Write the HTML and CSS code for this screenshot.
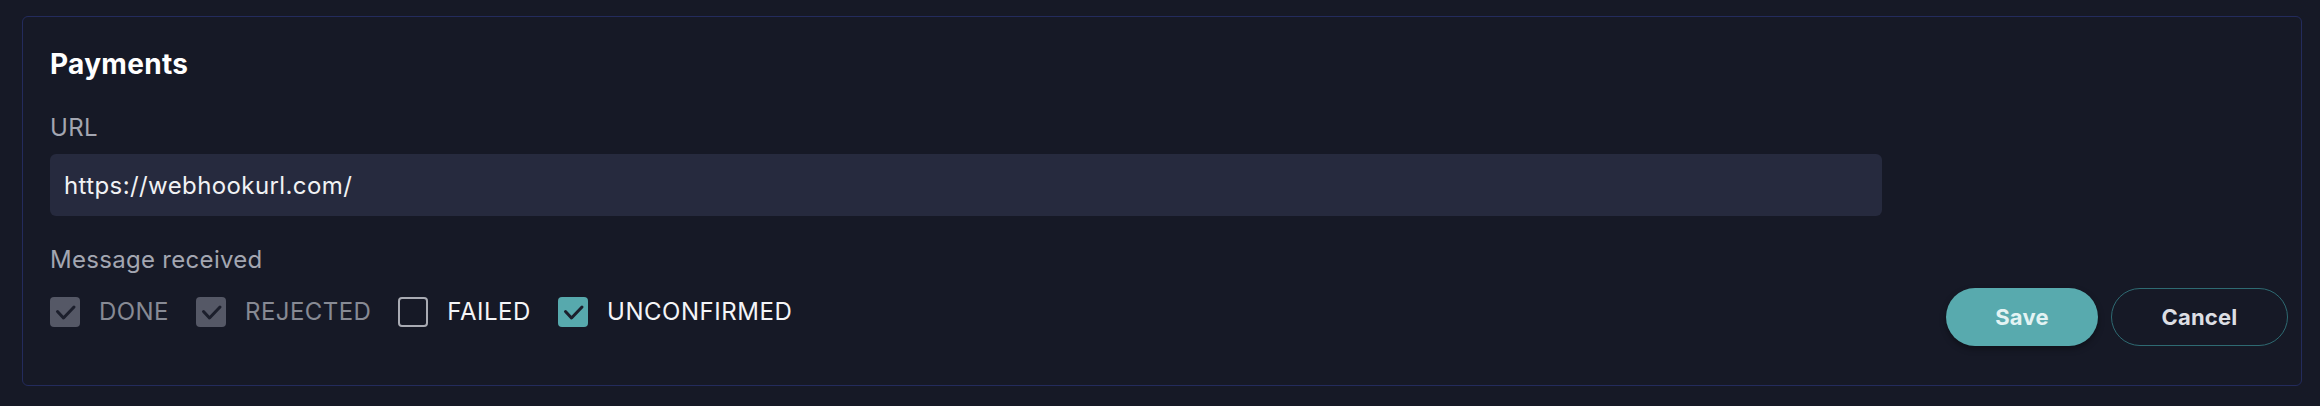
FILE: index.html
```html
<!DOCTYPE html>
<html lang="en">
<head>
<meta charset="utf-8">
<title>Webhook - Payments</title>
<link rel="stylesheet" href="styles.css">
</head>
<body>
<section class="card">
  <div class="form">
    <h2 class="title">Payments</h2>
    <label class="field-label" for="url">URL</label>
    <div class="input">https://webhookurl.com/</div>
    <div class="field-label msg">Message received</div>
    <div class="checks">
      <div class="check disabled">
        <span class="box checked"><svg viewBox="0 0 30 30"><path d="M7.5 14.5l6 6.5 10.5-11"/></svg></span>
        <span class="check-text">DONE</span>
      </div>
      <div class="check disabled">
        <span class="box checked"><svg viewBox="0 0 30 30"><path d="M7.5 14.5l6 6.5 10.5-11"/></svg></span>
        <span class="check-text">REJECTED</span>
      </div>
      <div class="check">
        <span class="box empty"></span>
        <span class="check-text">FAILED</span>
      </div>
      <div class="check active">
        <span class="box checked"><svg viewBox="0 0 30 30"><path d="M7.5 14.5l6 6.5 10.5-11"/></svg></span>
        <span class="check-text">UNCONFIRMED</span>
      </div>
    </div>
  </div>
  <div class="actions">
    <button class="btn save">Save</button>
    <button class="btn cancel">Cancel</button>
  </div>
</section>
</body>
</html>
```

FILE: styles.css
```css
html, body {
  margin: 0;
  padding: 0;
  background: #161926;
  font-family: Inter, "Liberation Sans", sans-serif;
}

.card {
  margin: 16px 18px 0 22px;
  border: 1px solid #232b5c;
  border-radius: 6px;
  padding: 31px 13px 39px 27px;
  display: flex;
  align-items: flex-end;
  gap: 64px;
  box-sizing: border-box;
  height: 370px;
}

.form {
  flex: 1;
  display: flex;
  flex-direction: column;
  padding-bottom: 19px;
}

.title {
  margin: 0;
  font-size: 28px;
  line-height: 32px;
  font-weight: 700;
  color: #ffffff;
  letter-spacing: 0.3px;
}

.field-label {
  display: block;
  margin-top: 34px;
  font-size: 24px;
  line-height: 28px;
  color: #a3a6b1;
  letter-spacing: 0.3px;
}

.field-label.msg {
  margin-top: 30px;
}

.input {
  margin-top: 12px;
  height: 62px;
  box-sizing: border-box;
  background: #262a3e;
  border-radius: 6px;
  padding: 0 14px;
  display: flex;
  align-items: center;
  font-size: 24px;
  color: #f1f2f4;
  letter-spacing: 0.4px;
}

.checks {
  margin-top: 23px;
  display: flex;
  gap: 27px;
}

.check {
  display: flex;
  align-items: center;
  gap: 19px;
  height: 30px;
}

.box {
  width: 30px;
  height: 30px;
  box-sizing: border-box;
  border-radius: 4px;
  display: block;
}

.box svg {
  width: 30px;
  height: 30px;
  display: block;
}

.box svg path {
  fill: none;
  stroke: #1c1f2c;
  stroke-width: 3;
  stroke-linecap: round;
  stroke-linejoin: round;
}

.disabled .box {
  background: #555866;
}

.active .box {
  background: #57a9ad;
}

.box.empty {
  border: 2.5px solid #a9abb3;
}

.check-text {
  font-size: 24px;
  line-height: 30px;
  color: #f4f5f7;
  letter-spacing: 0.55px;
}

.disabled .check-text {
  color: #878a94;
  letter-spacing: 0.45px;
}

.actions {
  display: flex;
  gap: 13px;
}

.btn {
  height: 58px;
  border-radius: 29px;
  font-family: Inter, "Liberation Sans", sans-serif;
  font-size: 22px;
  font-weight: 700;
  padding: 0;
  cursor: pointer;
  letter-spacing: 0.2px;
}

.save {
  width: 152px;
  background: #58aaae;
  border: none;
  color: #e3f3f3;
  box-shadow: 0 3px 6px rgba(0, 0, 0, 0.35);
}

.cancel {
  width: 177px;
  background: transparent;
  border: 1px solid #2e6a72;
  color: #dcdee3;
}
```
